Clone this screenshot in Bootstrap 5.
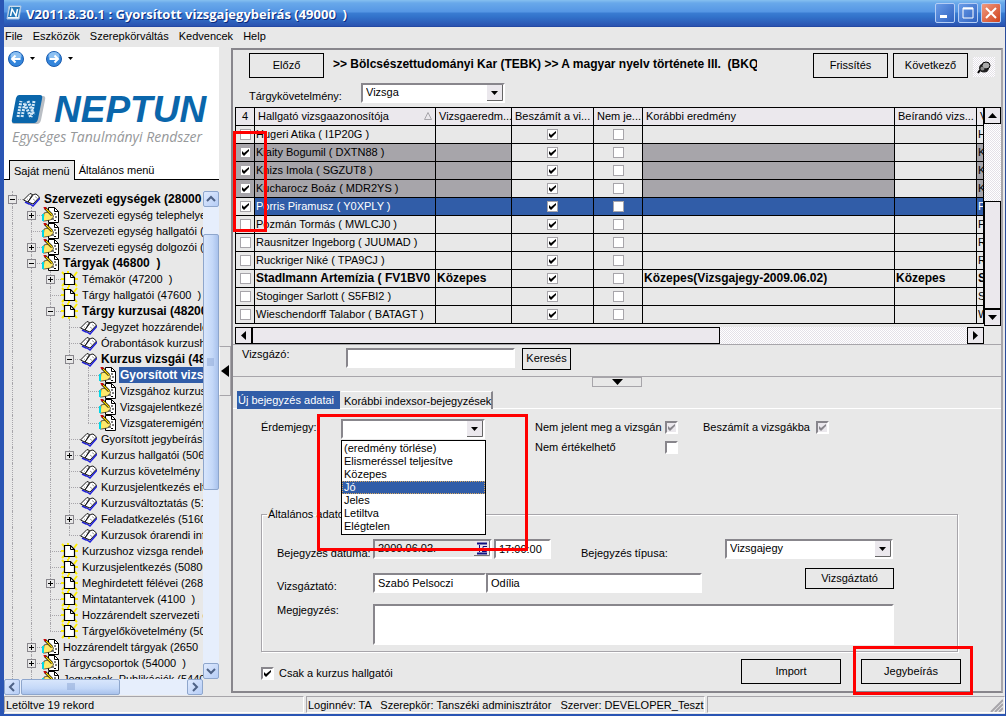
<!DOCTYPE html>
<html lang="hu">
<head>
<meta charset="utf-8">
<meta name="viewport" content="width=device-width, initial-scale=1">
<title>Gyorsított vizsgajegybeirás</title>
<link href="https://cdn.jsdelivr.net/npm/bootstrap@5.3.0/dist/css/bootstrap.min.css" rel="stylesheet">
<style>
:root{--face:#e8e8e8;--head:#ebe8ed;--sel:#315da8;--mid:#a7a5aa;--dark:#88868c}
body{font:11px/13px "Liberation Sans",Arial,sans-serif;color:#000;background:var(--face)}
.app{border-left:4px solid #2a55b4;border-right:1px solid #2a4c9c;border-bottom:2px solid #2a55b4;overflow:hidden}
.titlebar{height:27px;margin-left:-4px;padding:0 4px 0 6px;background:linear-gradient(#86c0f0 0,#68a8ea 3px,#5596e4 12px,#3a7cd2 13px,#3272ca 17px,#2a52b0 26px,#1c3f98 27px);color:#fff}
.titlebar h1{font:bold 13px/20px "Open Sans",sans-serif;text-shadow:1px 1px #0b2a7c;white-space:pre;padding-top:1px}
.winbtn{width:20px;height:20px;border:1px solid #b4cdf5;border-radius:2px;background:linear-gradient(135deg,#6a9ce8,#2f62c0);padding:0;display:flex;align-items:center;justify-content:center}
.winbtn.closer{background:linear-gradient(135deg,#f09a80,#d0421c)}
.menubar{height:20px;padding:3px 0 0 1px}
.menubar a{color:#000;text-decoration:none;font-size:11px;line-height:13px;margin-right:10px}
.side{width:215px}
.brand{height:113px;background:#fff;flex:none}
.brand-name{font:italic bold 37px/32px "Liberation Sans",sans-serif;color:#0a66ab;margin-left:4px}
.brand-sub{font:italic 14px/16px "Open Sans",sans-serif;color:#96989a;white-space:nowrap;margin-top:3px}
.roundbtn{width:16px;height:16px;padding:0;border:0;background:none;display:flex}
.sidetabs{background:#fff;height:20px;border-bottom:1px solid #000;padding-left:5px;flex:none}
.sidetabs button{border:0;background:none;padding:0 4px;height:20px;font-size:11px;line-height:20px;white-space:nowrap;color:#000}
.sidetabs button.on{border:1px solid #000;border-bottom:0;background:var(--face)}
.tree{overflow:hidden;min-width:0}
.trow{height:16px;display:flex;align-items:center;white-space:pre;font-size:11px;line-height:16px}
.trow svg{flex:none;width:17px;height:16px;overflow:visible}
.trow .lbl{margin-left:3px;padding:0 2px 0 1px}
.trow.strong{font-weight:bold;font-size:12px}
.trow.picked .lbl{background:var(--sel);color:#fff;flex:1 0 auto}
.gd{flex:none;width:19px;height:16px;position:relative}
.gd.v::before,.gd.half::before{content:"";position:absolute;left:8px;top:0;height:16px;border-left:1px dotted var(--mid)}
.gd.half::before{height:8px}
.gd.h::after{content:"";position:absolute;left:8px;right:0;top:8px;border-top:1px dotted var(--mid)}
.gd i{position:absolute;z-index:1;left:4px;top:4px;width:9px;height:9px;border:1px solid var(--dark);background:linear-gradient(#000,#000) 1px 3px/5px 1px no-repeat var(--face)}
.gd i.plus{background:linear-gradient(#000,#000) 1px 3px/5px 1px no-repeat,linear-gradient(#000,#000) 3px 1px/1px 5px no-repeat var(--face)}
.xpbar{background:#e6eefc}
.xpbtn,.xpthumb{border:1px solid #8ea6cc;border-radius:2px;background:linear-gradient(135deg,#dfeafe,#b6cdf6);padding:0;display:flex;align-items:center;justify-content:center;flex:none}
.xpbar.vert{width:16px}.xpbar.horz{height:16px;width:199px;flex:none;margin-bottom:1px}
.vert .xpbtn,.horz .xpbtn{width:16px;height:16px}
.vert .xpthumb{height:256px;margin-top:27px;background:linear-gradient(90deg,#d8e6fc,#c4d8f8 60%,#a9c2ec)}
.horz .xpthumb{width:99px;margin-left:1px;background:linear-gradient(#d8e6fc,#c4d8f8 60%,#a9c2ec)}
.splitter{width:12px;padding-top:299px}
.splitter button{width:12px;height:50px;border:1px solid var(--mid);border-left-color:#fff;background:var(--face);padding:0;display:flex;align-items:center;justify-content:center}
.work{border:2px solid var(--dark);border-right:2px solid var(--mid);margin:1px 2px 3px 0;min-width:0}
.flatbtn{border:1px solid #000;border-radius:0;background:transparent;color:#000;font-size:11px;line-height:13px;padding:0;height:25px;width:75px}
.flatbtn:hover{background:#ddd;color:#000}
.crumb{font:bold 12px/14px "Liberation Sans",sans-serif;white-space:pre;overflow:hidden;width:424px}
.field,.pick{border:2px solid;border-color:var(--dark) #fff #fff var(--dark);border-radius:0;background:#fff;height:20px;padding:0 3px;font-size:11px;line-height:15px;color:#000;box-shadow:none;appearance:none;outline:0;display:block}
.pick{background:#fff url("data:image/svg+xml,%3Csvg xmlns='http://www.w3.org/2000/svg' width='16' height='16'%3E%3Cpath fill='%23ebe8ed' d='M0 0h16v16H0z'/%3E%3Cpath d='M15.500 0v15.500H0' fill='none' stroke='%23666'/%3E%3Cpath d='M4 6h7l-3.500 4z'/%3E%3C/svg%3E") right 0 top 0 no-repeat}
.grid{table-layout:fixed;border-collapse:collapse;width:100%;color:#000}
.grid th,.grid td{border:1px solid #000;height:18px;line-height:16px;padding:0 1px 1px;white-space:pre;overflow:hidden;font-size:11px}
.grid th{background:var(--head);font-weight:400;padding:0 3px 1px}
.grid .c{text-align:center;padding:0}
.grid .gray{background:var(--mid)}
.grid .blue{background:var(--sel);color:#fff}
.grid .b{font-weight:bold;font-size:12px}
.tick{appearance:none;flex:none;width:13px;height:13px;margin:0;border:2px solid;border-color:var(--dark) #fff #fff var(--dark);background:#fff center/9px 9px no-repeat;display:inline-block;vertical-align:middle}
.grid .tick{width:11px;height:11px;border:1px solid var(--mid);display:block;margin:0 auto}
.tick:checked{background-image:url("data:image/svg+xml,%3Csvg xmlns='http://www.w3.org/2000/svg' viewBox='0 0 9 9'%3E%3Cpath d='M1 3v3l2 2 5-5V1L3 5z'/%3E%3C/svg%3E")}
.tick:disabled{background-color:var(--head)}
.tick:disabled:checked{background-image:url("data:image/svg+xml,%3Csvg xmlns='http://www.w3.org/2000/svg' viewBox='0 0 9 9'%3E%3Cpath fill='%2388868c' d='M1 3v3l2 2 5-5V1L3 5z'/%3E%3C/svg%3E")}
.dither{background:repeating-conic-gradient(#fff 0 25%,#e4e1e8 0 50%) 0 0/2px 2px}
.bkbtn{flex:none;width:17px;height:17px;border:1px solid #000;background:var(--head);padding:0;display:flex;align-items:center;justify-content:center}
.bkthumb{border:1px solid #000;background:var(--head)}
.worktabs{padding:3px 0 0 4px;height:21px;border-bottom:1px solid #fff;margin-top:1px}
.worktabs button{border:0;background:none;height:18px;padding:0 3px;font-size:11px;line-height:18px;white-space:nowrap;color:#000;text-align:left}
.worktabs .on{background:var(--sel);color:#fff;width:103px;padding:0 1px}
.worktabs .off{border-top:1px solid #fff;border-right:2px solid var(--dark);margin-left:1px;padding-right:0}
.callout{position:absolute;border:3px solid #f00;pointer-events:none;z-index:6}
.options{position:absolute;z-index:5;left:0;top:21px;width:145px;background:#fff;border:1px solid #000;margin:0;padding:1px 0}
.options li{height:13px;line-height:13px;padding-left:2px}
.options li.on{background:var(--sel);color:#fff;outline:1px dotted #d9a860;outline-offset:-1px}
.group{border:1px solid var(--mid);box-shadow:1px 1px #fff,inset 1px 1px #fff;margin:0 43px 0 26px;padding:18px 11px 0;height:144px}
.group legend{float:none;width:auto;font-size:11px;line-height:13px;padding:0 1px;margin:0 0 0 -6px}
.lab{width:96px;flex:none}
.status{height:18px;font-size:11px;line-height:15px}
.status>div{border:1px solid;border-color:var(--mid) #fff #fff var(--mid);white-space:pre;padding:1px 1px 0;height:17px;overflow:hidden}
</style>
</head>
<body>
<svg width="0" height="0" class="position-absolute" aria-hidden="true">
<symbol id="book" viewBox="0 0 17 16"><path d="M2 11l4 2h1l3 2 7-8" fill="none" stroke="#2020d8" stroke-width="1.500"/><path d="M.5 9L7 2.500l2.500 1L5 11z" fill="#fff" stroke="#000" stroke-width=".9"/><path d="M5 11l5.500-7.500L13 3l3.500 3L10 13z" fill="#fff" stroke="#000" stroke-width=".9"/><path d="M12 5.500l2 1.500M10 8l2 1.500M6.500 5.500l1 .5M4 8l1 .5" stroke="#777" fill="none" stroke-width=".7"/></symbol>
<symbol id="page" viewBox="0 0 17 16"><path d="M1 1l4 4M16 1l-3 4M0 8h3M14 8h3M1 15l3-3M16 15l-3-3M7 0v3M8 16v-3" stroke="#ffee00" stroke-width="2"/><path d="M3.500 2.500h6l4 4v7h-10z" fill="#fff" stroke="#000" stroke-width="1.200"/><path d="M9.500 2.500v4h4" fill="none" stroke="#000"/></symbol>
<symbol id="hand" viewBox="0 0 17 16"><path d="M6.500 .5h6l4 4v11h-10z" fill="#fff" stroke="#000"/><path d="M12.500 .5v4h4M12 7h2M10 9h1M13 10h2M9 12h3M12 13.500h2" fill="none" stroke="#000"/><path d="M2 6l4-1 5 3 .5 2-3 3-6 1H1z" fill="#ffe96a" stroke="#000" stroke-width=".6"/><path d="M0 7h2v7H0z" fill="#00d8e8"/><path d="M3 1l7 7" stroke="#000" stroke-width="2.500"/><path d="M4 2l6 6" stroke="#ffdc00" stroke-width="1.200"/><path d="M2 0l2 2" stroke="#d00000" stroke-width="2"/></symbol>
</svg>
<div class="app vh-100 d-flex flex-column">
  <header class="titlebar d-flex align-items-center">
    <svg width="16" height="16" viewBox="0 0 16 16" class="me-1"><path d="M3 1h12l-2 13H1z" fill="#eef4fb" stroke="#a8c4e0"/><path d="M4 2h10l-2 10H2z" fill="#2478b8"/><path d="M4.500 11L6 4l4 7 1.500-7" fill="none" stroke="#fff" stroke-width="1.500"/></svg>
    <h1 class="mb-0 flex-grow-1">V2011.8.30.1 : Gyorsított vizsgajegybeirás (49000  )</h1>
    <div class="d-flex" style="gap:3px">
      <button class="winbtn" aria-label="Kis méret"><svg width="14" height="14"><path d="M2 9h7v3H2z" fill="#fff"/></svg></button>
      <button class="winbtn" aria-label="Teljes méret"><svg width="14" height="14"><path d="M2 2h10v10H2z" fill="none" stroke="#fff"/><path d="M2 2.500h10" stroke="#fff" stroke-width="2"/></svg></button>
      <button class="winbtn closer" aria-label="Bezárás"><svg width="14" height="14"><path d="M2 2l10 10M12 2L2 12" stroke="#fff" stroke-width="2"/></svg></button>
    </div>
  </header>
  <nav class="menubar d-flex"><a href="#">File</a><a href="#">Eszközök</a><a href="#">Szerepkörváltás</a><a href="#">Kedvencek</a><a href="#">Help</a></nav>

  <main class="d-flex flex-grow-1" style="min-height:0">
    <aside class="side d-flex flex-column flex-shrink-0">
      <div class="brand px-1 pt-1">
        <div class="d-flex align-items-center">
          <button class="roundbtn" aria-label="Vissza"><svg width="16" height="16"><circle cx="8" cy="8" r="7.500" fill="#3486dc" stroke="#1b5cae"/><ellipse cx="8" cy="5" rx="5.500" ry="4" fill="#8cc0f2"/><path d="M12.500 8H4M7.500 4.500L4 8l3.500 3.500" fill="none" stroke="#fff" stroke-width="2"/></svg></button>
          <svg width="22" height="16"><path d="M6 6h5l-2.500 3z"/></svg>
          <button class="roundbtn" aria-label="Előre"><svg width="16" height="16"><circle cx="8" cy="8" r="7.500" fill="#3486dc" stroke="#1b5cae"/><ellipse cx="8" cy="5" rx="5.500" ry="4" fill="#8cc0f2"/><path d="M3.500 8H12M8.500 4.500L12 8l-3.500 3.500" fill="none" stroke="#fff" stroke-width="2"/></svg></button>
          <svg width="22" height="16"><path d="M6 6h5l-2.500 3z"/></svg>
        </div>
        <div class="d-flex align-items-center mt-4 ps-1" style="padding-top:3px">
          <svg width="35" height="30" viewBox="0 0 35 30" class="me-1" style="margin-left:-1px"><path d="M8 1h24q3 0 2 4l-4 20q-1 4-4 4H3q-2 0-2-2z" fill="#b9bec4"/><path d="M8 0h21q3 0 2 4l-4 20q-1 4-4 4H3q-3 0-2-4L5 3q1-3 3-3z" fill="#0a66ab"/><path d="M7 22L10 6M11 22l3-15M14 9l6 14M17 6l6 14M23 6l-3 16" stroke="#d4e8f6" stroke-width="3" stroke-dasharray="2 1" fill="none"/></svg>
          <div class="brand-name">NEPTUN</div>
        </div>
        <div class="brand-sub ps-1">Egységes Tanulmányi Rendszer</div>
      </div>
      <div class="sidetabs d-flex"><button class="on">Saját menü</button><button>Általános menü</button></div>
      <div class="d-flex flex-grow-1" style="min-height:0;margin-top:11px">
        <div class="tree flex-grow-1" id="tree"></div>
        <div class="xpbar vert d-flex flex-column flex-shrink-0">
          <button class="xpbtn" aria-label="Fel"><svg width="10" height="10"><path d="M1 7l4-4 4 4" fill="none" stroke="#4d6185" stroke-width="2"/></svg></button>
          <div class="xpthumb"><svg width="8" height="8"><path d="M0 1h7M0 3h7M0 5h7M0 7h7" stroke="#8ca6d4"/></svg></div>
          <button class="xpbtn mt-auto" aria-label="Le"><svg width="10" height="10"><path d="M1 3l4 4 4-4" fill="none" stroke="#4d6185" stroke-width="2"/></svg></button>
        </div>
      </div>
      <div class="xpbar horz d-flex">
        <button class="xpbtn" aria-label="Balra"><svg width="10" height="10"><path d="M7 1L3 5l4 4" fill="none" stroke="#4d6185" stroke-width="2"/></svg></button>
        <div class="xpthumb"><svg width="8" height="8"><path d="M1 0v7M3 0v7M5 0v7M7 0v7" stroke="#8ca6d4"/></svg></div>
        <button class="xpbtn ms-auto" aria-label="Jobbra"><svg width="10" height="10"><path d="M3 1l4 4-4 4" fill="none" stroke="#4d6185" stroke-width="2"/></svg></button>
      </div>
    </aside>
    <div class="splitter flex-shrink-0"><button aria-label="Menü elrejtése"><svg width="8" height="12"><path d="M8 0v12L0 6z"/></svg></button></div>

    <section class="work flex-grow-1 d-flex flex-column">
      <div class="d-flex align-items-start" style="padding:3px 6px 0 16px;gap:5px">
        <button class="flatbtn me-1">Előző</button>
        <div class="crumb mt-1 pt-0">&gt;&gt; Bölcsészettudományi Kar (TEBK) &gt;&gt; A magyar nyelv története III.  (BKQ</div>
        <button class="flatbtn ms-auto">Frissítés</button>
        <button class="flatbtn">Következő</button>
        <button class="dither border-0 p-0 mt-1" style="width:22px;height:20px" aria-label="Rögzítés"><svg width="14" height="14" viewBox="0 0 14 14"><path d="M3 10L1 13" stroke="#000" stroke-width="2"/><ellipse cx="7" cy="8" rx="5" ry="4.500" fill="#222"/><ellipse cx="9" cy="5.500" rx="4" ry="3.500" fill="#aaa" stroke="#000"/><circle cx="5.500" cy="8.500" r="2" fill="#888"/></svg></button>
      </div>
      <div class="d-flex align-items-end ps-3 pb-1" style="height:29px">
        <label for="req" style="width:112px">Tárgykövetelmény:</label>
        <select id="req" class="pick" style="width:144px"><option>Vizsga</option></select>
      </div>

      <div class="position-relative" style="margin:0 0 0 2px">
        <div class="d-flex border-top border-dark">
          <div class="flex-grow-1 overflow-hidden" style="height:219px;margin-top:-1px">
            <table class="grid"><colgroup><col style="width:19px"><col style="width:181px"><col style="width:76px"><col style="width:82px"><col style="width:49px"><col><col style="width:82px"><col style="width:7px"></colgroup>
            <thead><tr><th class="c">4</th><th><span class="d-flex justify-content-between">Hallgató vizsgaazonosítója<svg width="8" height="9" class="mt-1"><path d="M.5 7.500h7L4 .5z" fill="none" stroke="#a7a5aa"/></svg></span></th><th>Vizsgaeredm...</th><th>Beszámít a vi...</th><th>Nem je...</th><th>Korábbi eredmény</th><th>Beírandó vizs...</th><th>V</th></tr></thead>
            <tbody id="rows"></tbody></table>
          </div>
          <div class="dither d-flex flex-column flex-shrink-0" style="width:17px">
            <button class="bkbtn" style="margin-top:-1px" aria-label="Fel"><svg width="9" height="5"><path d="M0 5h9L4.500 0z"/></svg></button>
            <div class="bkthumb mt-auto" style="height:108px"></div>
            <button class="bkbtn" aria-label="Le"><svg width="9" height="5"><path d="M0 0h9L4.500 5z"/></svg></button>
          </div>
        </div>
        <div class="d-flex" style="padding:1px 17px 0 0">
          <div class="dither d-flex flex-grow-1">
            <button class="bkbtn" aria-label="Balra"><svg width="5" height="9"><path d="M5 0v9L0 4.500z"/></svg></button>
            <div class="bkthumb" style="width:468px"></div>
            <button class="bkbtn ms-auto" aria-label="Jobbra"><svg width="5" height="9"><path d="M0 0v9l5-4.500z"/></svg></button>
          </div>
        </div>
        <div class="callout" style="left:-2px;top:24px;width:34px;height:101px"></div>
      </div>

      <div class="d-flex" style="border-top:1px solid var(--mid);border-bottom:1px solid var(--mid);height:33px;padding:3px 0 0 9px">
        <label for="who" style="width:104px">Vizsgázó:</label>
        <input id="who" class="field" style="width:169px">
        <button class="flatbtn" style="width:49px;height:22px;margin-left:7px">Keresés</button>
      </div>
      <div class="d-flex justify-content-center" style="height:10px"><button aria-label="Lista elrejtése" class="p-0 d-flex align-items-center justify-content-center" style="width:50px;height:10px;border:1px solid var(--mid);background:var(--face)"><svg width="11" height="6"><path d="M0 0h11L5.500 6z"/></svg></button></div>

      <div class="worktabs d-flex"><button class="on">Új bejegyzés adatai</button><button class="off">Korábbi indexsor-bejegyzések</button></div>
      <div class="flex-grow-1 d-flex flex-column" style="margin-left:2px">
        <div class="d-flex" style="padding:10px 0 0 26px;height:99px">
          <label for="grade" style="width:80px;padding-top:2px">Érdemjegy:</label>
          <div class="position-relative" style="width:194px">
            <select id="grade" class="pick" style="width:144px"><option value=""></option></select>
            <ul class="options list-unstyled" role="listbox" aria-label="Érdemjegy"><li role="option">(eredmény törlése)</li><li role="option">Elismeréssel teljesítve</li><li role="option">Közepes</li><li role="option" class="on" aria-selected="true">Jó</li><li role="option">Jeles</li><li role="option">Letiltva</li><li role="option">Elégtelen</li></ul>
            <div class="callout" style="left:-24px;top:-5px;width:211px;height:137px"></div>
          </div>
          <div style="width:168px;padding-top:2px">
            <div class="d-flex"><label for="k1" style="width:130px" class="text-nowrap">Nem jelent meg a vizsgán</label><input id="k1" type="checkbox" class="tick" checked disabled></div>
            <div class="d-flex" style="margin-top:7px"><label for="k2" style="width:130px">Nem értékelhető</label><input id="k2" type="checkbox" class="tick"></div>
          </div>
          <div class="d-flex align-items-start" style="padding-top:2px"><label for="k3" style="width:113px" class="text-nowrap">Beszámít a vizsgákba</label><input id="k3" type="checkbox" class="tick" checked disabled></div>
        </div>
        <fieldset class="group"><legend>Általános adatok</legend>
          <div class="d-flex">
            <label for="dt" class="lab ms-1 mt-2">Bejegyzés dátuma:</label>
            <div class="field d-flex align-items-center justify-content-between pe-0" style="width:119px;background:var(--face)"><input id="dt" class="border-0 p-0 bg-transparent" style="width:80px;line-height:15px" value="2009.06.02."><button class="border-0 p-0 d-flex" style="background:var(--head)" aria-label="Naptár"><svg width="16" height="15"><path d="M15.500 0v14.500H0" fill="none" stroke="#777"/><path d="M3 2.500h10M3 12.500h10" stroke="#101080" stroke-width="2"/><path d="M5.500 4v7M13 5.500H9V7.500h3.500v3H8" fill="none" stroke="#101080"/></svg></button></div>
            <input class="field" style="width:57px;margin-left:2px" value="17:00:00" aria-label="Időpont">
            <label for="ty" class="mt-2" style="margin-left:30px;width:144px">Bejegyzés típusa:</label>
            <select id="ty" class="pick" style="width:168px"><option>Vizsgajegy</option></select>
          </div>
          <div class="d-flex align-items-end" style="height:33px">
            <label for="ex" class="lab ms-1">Vizsgáztató:</label>
            <input id="ex" class="field" style="width:113px" value="Szabó Pelsoczi"><input class="field" style="width:216px" value="Odília" aria-label="Vizsgáztató keresztneve">
            <button class="flatbtn mb-1" style="width:89px;height:21px;margin-left:103px">Vizsgáztató</button>
          </div>
          <div class="d-flex" style="margin-top:11px"><label for="memo" class="lab ms-1">Megjegyzés:</label><textarea id="memo" class="field" style="width:521px;height:41px;resize:none"></textarea></div>
        </fieldset>
        <div class="d-flex align-items-center" style="padding:7px 40px 0 26px">
          <input id="only" type="checkbox" class="tick mt-1" checked><label for="only" class="mt-1" style="margin-left:5px">Csak a kurzus hallgatói</label>
          <button class="flatbtn ms-auto" style="width:100px">Import</button>
          <div class="position-relative" style="margin-left:20px"><button class="flatbtn" style="width:100px">Jegybeírás</button><div class="callout" style="inset:-13px -12px -11px -8px"></div></div>
        </div>
      </div>
    </section>
  </main>
  <footer class="status d-flex flex-shrink-0" style="gap:2px">
    <div style="width:300px">Letöltve 19 rekord</div><div style="width:399px">Loginnév: TA   Szerepkör: Tanszéki adminisztrátor   Szerver: DEVELOPER_Teszt</div>
    <div class="flex-grow-1 d-flex justify-content-end align-items-end"><svg width="13" height="13"><path d="M1 13L13 1M5 13l8-8M9 13l4-4" stroke="#a7a5aa" stroke-width="2"/></svg></div>
  </footer>
</div>
<script>
// level, icon, expander, label, flags (b = bold, s = selected)
const nodes=[[0,'book','-','Szervezeti egységek (28000  )','b'],[1,'hand','+','Szervezeti egység telephelyei'],[1,'hand','','Szervezeti egység hallgatói (28400  )'],[1,'hand','+','Szervezeti egység dolgozói (28800  )'],[1,'hand','-','Tárgyak (46800  )','b'],
[2,'page','+','Témakör (47200  )'],[2,'page','','Tárgy hallgatói (47600  )'],[2,'page','-','Tárgy kurzusai (48200  )','b'],[3,'book','','Jegyzet hozzárendelése'],[3,'book','','Órabontások kurzushoz'],[3,'book','-','Kurzus vizsgái (48600  )','b'],
[4,'hand','','Gyorsított vizsgajegybeirás','bs'],[4,'hand','','Vizsgához kurzus'],[4,'hand','','Vizsgajelentkezés'],[4,'hand','','Vizsgateremigény'],
[3,'book','','Gyorsított jegybeírás'],[3,'book','+','Kurzus hallgatói (50600  )'],[3,'book','','Kurzus követelmény el'],[3,'book','','Kurzusjelentkezés elfogadás'],[3,'book','','Kurzusváltoztatás (51200  )'],[3,'book','+','Feladatkezelés (51600  )'],[3,'book','','Kurzusok órarendi információi'],
[2,'page','','Kurzushoz vizsga rendelése'],[2,'page','','Kurzusjelentkezés (50800  )'],[2,'page','+','Meghirdetett félévei (26840  )'],[2,'page','','Mintatantervek (4100  )'],[2,'page','','Hozzárendelt szervezeti egység'],[2,'page','','Tárgyelőkövetelmény (50400  )'],
[1,'hand','+','Hozzárendelt tárgyak (2650  )'],[1,'hand','+','Tárgycsoportok (54000  )'],[1,'hand','','Jegyzetek, Publikációk (54400  )']];
const goesOn=(i,l)=>{if(l<2)return true;for(let k=i+1;k<nodes.length;k++){if(nodes[k][0]===l)return true;if(nodes[k][0]<l)return false}return false};
document.getElementById('tree').innerHTML=nodes.map(([l,ic,ex,t,f=''],i)=>{
  let g='';for(let j=0;j<l;j++)g+=`<span class="gd ${goesOn(i,j)?'v':''}"></span>`;
  g+=`<span class="gd h ${goesOn(i,l)?'v':'half'}">${ex?`<i class="${ex==='+'?'plus':''}"></i>`:''}</span>`;
  return `<div class="trow ${f.includes('b')?'strong':''} ${f.includes('s')?'picked':''}">${g}<svg><use href="#${ic}"/></svg><span class="lbl">${t}</span></div>`}).join('');
// name, checked, row colour
const people=[['Hugeri Atika ( I1P20G )',0,''],['Kiaity Bogumil ( DXTN88 )',1,'gray'],['Knizs Imola ( SGZUT8 )',1,'gray'],['Kucharocz Boáz ( MDR2YS )',1,'gray'],['Porris Piramusz ( Y0XPLY )',1,'blue'],['Pozmán Tormás ( MWLCJ0 )',0,''],['Rausnitzer Ingeborg ( JUUMAD )',0,''],['Ruckriger Niké ( TPA9CJ )',0,''],['Stadlmann Artemízia ( FV1BV0',0,'b'],['Stoginger Sarlott ( S5FBI2 )',0,''],['Wieschendorff Talabor ( BATAGT )',0,'']];
const box=(on,n)=>`<input type="checkbox" class="tick" aria-label="${n}" ${on?'checked':''}>`;
document.getElementById('rows').innerHTML=people.map(([n,on,c])=>{
  const k=c==='b',bl=c==='blue'?'blue':'';
  return `<tr><td class="c ${c==='gray'?c:''}">${box(on,n)}</td><td class="${c}">${n}</td><td class="${c}">${k?'Közepes':''}</td><td class="c ${bl}">${box(1,'Beszámít')}</td><td class="c ${bl}">${box(0,'Nem jelent meg')}</td><td class="${c}">${k?'Közepes(Vizsgajegy-2009.06.02)':''}</td><td class="${bl} ${k?'b':''}">${k?'Közepes':''}</td><td class="${c}">${n[0]}</td></tr>`}).join('');
</script>
<script src="https://cdn.jsdelivr.net/npm/bootstrap@5.3.0/dist/js/bootstrap.bundle.min.js"></script>
</body>
</html>
